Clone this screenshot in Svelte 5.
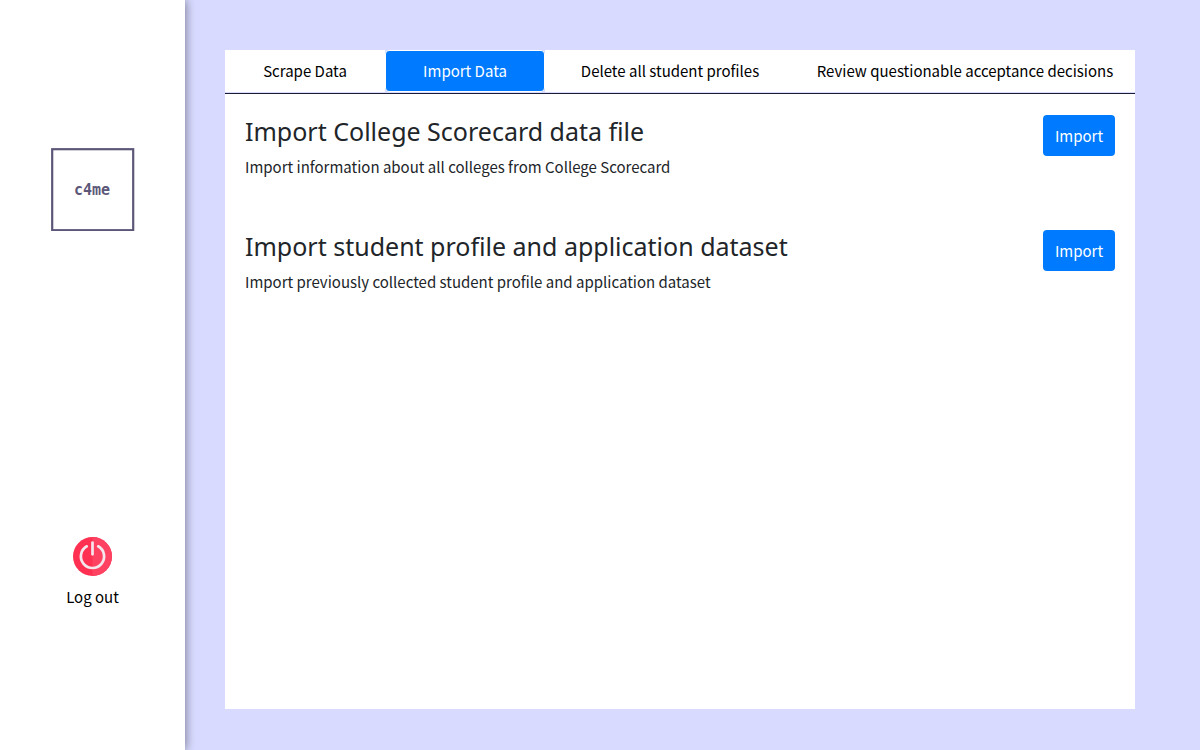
<script>
  const tabs = ['Scrape Data', 'Import Data', 'Delete all student profiles', 'Review questionable acceptance decisions'];
  let active = $state(1);
  const imports = [
    { title: 'Import College Scorecard data file', text: 'Import information about all colleges from College Scorecard' },
    { title: 'Import student profile and application dataset', text: 'Import previously collected student profile and application dataset' }
  ];
</script>

<div class="page">
  <aside>
    <a class="logo" href="#home" aria-label="c4me home">
      <svg viewBox="0 0 84 84" width="84" height="84" aria-hidden="true">
        <rect x="1.2" y="2.2" width="81" height="81" fill="none" stroke="#5c5778" stroke-width="2.2" />
        <text x="41" y="48" text-anchor="middle">c4me</text>
      </svg>
    </a>
    <button class="logout" type="button">
      <svg viewBox="0 0 40 40" width="40" height="40" aria-hidden="true">
        <circle cx="19.5" cy="19.5" r="19.5" fill="#ff3051" />
        <path d="M19.5 0a19.5 19.5 0 0 1 0 39z" fill="#ff4261" />
        <path d="M13.8 9.3a11.6 11.6 0 1 0 11.4 0" fill="none" stroke="#f4e6ec" stroke-width="2.7" stroke-linecap="round" />
        <path d="M19.5 5.5v11.8" fill="none" stroke="#f4e6ec" stroke-width="2.7" stroke-linecap="round" />
      </svg>
      <span>Log out</span>
    </button>
  </aside>

  <main>
    <nav>
      {#each tabs as tab, i}
        <button type="button" class="tab" class:active={active === i} onclick={() => (active = i)}>{tab}</button>
      {/each}
    </nav>
    <div class="panel">
      {#each imports as item}
        <section>
          <div>
            <h3>{item.title}</h3>
            <p>{item.text}</p>
          </div>
          <button type="button" class="import">Import</button>
        </section>
      {/each}
    </div>
  </main>
</div>

<style>
  :global(body) {
    background: #d8daff;
  }
  .page {
    display: flex;
    min-height: 100vh;
    box-sizing: border-box;
    font: 15px/24px 'Noto Sans CJK SC', 'Noto Sans', sans-serif;
    color: #212529;
  }
  button {
    font: inherit;
    border: 0;
    padding: 0;
    cursor: pointer;
  }
  aside {
    flex: 0 0 185px;
    display: flex;
    flex-direction: column;
    justify-content: space-between;
    align-items: center;
    padding: 147px 0 141px;
    box-sizing: border-box;
    background: #fff;
    box-shadow: 0 0 10px rgba(0, 0, 0, 0.5);
  }
  .logo svg,
  .logout svg {
    display: block;
  }
  .logo text {
    font: bold 15px 'DejaVu Sans Mono', monospace;
    fill: #5c5778;
  }
  .logout {
    display: flex;
    flex-direction: column;
    align-items: center;
    gap: 8px;
    background: none;
    color: #000;
  }
  main {
    flex: 1;
    min-width: 0;
    display: flex;
    flex-direction: column;
    margin: 50px 65px 41px 40px;
  }
  nav {
    display: grid;
    grid-template-columns: 16fr 16fr 25fr 34fr;
    padding-bottom: 1px;
    border-bottom: 1px solid #1b1c38;
  }
  .tab {
    height: 42px;
    border: 1px solid #fff;
    background: #fff;
    color: #000;
    white-space: nowrap;
  }
  .tab.active {
    background: #007bff;
    color: #fff;
    border-radius: 4px;
  }
  .panel {
    flex: 1;
    padding: 0 20px;
    background: #fff;
  }
  section {
    display: flex;
    justify-content: space-between;
    align-items: flex-start;
    padding-top: 21px;
    height: 115px;
    box-sizing: border-box;
  }
  h3 {
    margin: 0 0 8px;
    font-family: 'Noto Sans', sans-serif;
    font-size: 25px;
    font-weight: 400;
    line-height: 32px;
  }
  p {
    margin: 0;
  }
  .import {
    width: 72px;
    height: 41px;
    border-radius: 4px;
    background: #007bff;
    color: #fff;
  }
</style>
